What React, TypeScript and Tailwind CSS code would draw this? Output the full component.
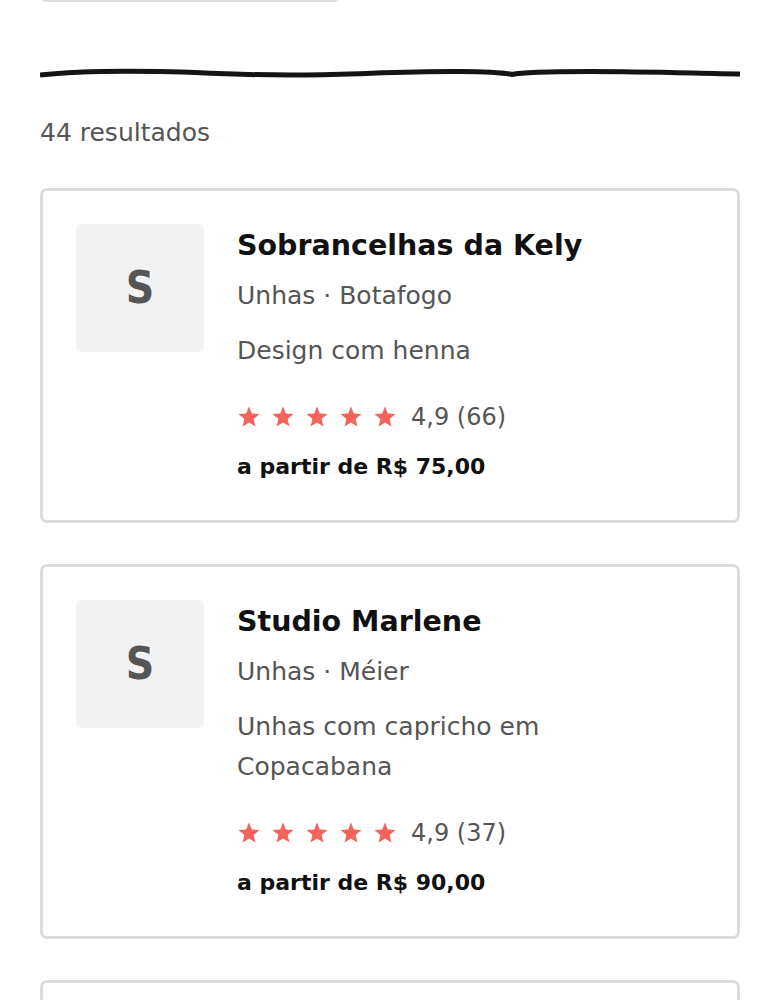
type Salon = {
  name: string;
  category: string;
  area: string;
  blurb: string;
  rating: string;
  reviews: number;
  price: string;
};

const salons: Salon[] = [
  {
    name: "Sobrancelhas da Kely",
    category: "Unhas",
    area: "Botafogo",
    blurb: "Design com henna",
    rating: "4,9",
    reviews: 66,
    price: "R$ 75,00",
  },
  {
    name: "Studio Marlene",
    category: "Unhas",
    area: "Méier",
    blurb: "Unhas com capricho em Copacabana",
    rating: "4,9",
    reviews: 37,
    price: "R$ 90,00",
  },
  {
    name: "Espaço Bella",
    category: "Unhas",
    area: "Tijuca",
    blurb: "Manicure e pedicure",
    rating: "4,8",
    reviews: 52,
    price: "R$ 60,00",
  },
];

// wavy divider, hand drawn look
const Squiggle = () => (
  <svg className="block w-full h-[14px]" viewBox="0 0 700 14" preserveAspectRatio="none">
    <path
      d="M0 9 C 30 5.5, 70 4.5, 120 5.5 C 170 6.5, 200 9.5, 260 9 C 320 8.5, 360 5, 420 5.5 C 450 5.8, 465 7, 472 8.5 C 478 7, 500 5.5, 550 5.5 C 610 5.5, 660 7.5, 700 8"
      fill="none"
      stroke="#141414"
      strokeWidth="5"
    />
  </svg>
);

const StarIcon = () => (
  <svg width="24" height="24" viewBox="0 0 24 24">
    <polygon
      points="12,1.5 14.8,8.6 22.5,9.1 16.6,14 18.5,21.6 12,17.4 5.5,21.6 7.4,14 1.5,9.1 9.2,8.6"
      fill="#f4645c"
    />
  </svg>
);

const SalonCard = ({ s }: { s: Salon }) => {
  return (
    <article className="flex gap-[33px] rounded-[7px] border-[3px] border-[#dcdcdc] bg-white px-[33px] pt-[33px] pb-[37px]">
      <div className="flex h-[128px] w-[128px] shrink-0 items-center justify-center rounded-[5px] bg-[#f2f2f2]">
        <span className="font-['DejaVu_Sans_Condensed','Liberation_Sans',sans-serif] text-[44px] font-bold text-[#555]">
          {s.name[0]}
        </span>
      </div>

      <div className="flex flex-col pt-[1px]">
        <h2 className="pt-[1px] text-[28.5px] leading-[40px] font-bold text-[#111]">{s.name}</h2>
        <p className="mt-[12px] text-[25px] leading-[36px] text-[#555]">
          {s.category} · {s.area}
        </p>
        <p className="mt-[17px] w-[330px] text-[25px] leading-[40px] text-[#555]">{s.blurb}</p>

        <div className="mt-[30px] flex h-[32px] items-center">
          <div className="flex gap-[10px]">
            {[0, 1, 2, 3, 4].map((i) => (
              <StarIcon key={i} />
            ))}
          </div>
          <span className="ml-[14px] text-[24px] text-[#555]">
            {s.rating} ({s.reviews})
          </span>
        </div>

        <p className="mt-[18px] text-[22px] leading-[32px] font-bold text-[#111]">a partir de {s.price}</p>
      </div>
    </article>
  );
};

export default function App() {
  return (
    <div className="h-[1000px] overflow-hidden bg-white font-['DejaVu_Sans','Liberation_Sans',sans-serif]">
      <div className="mx-[40px]">
        {/* tail end of the filter button above */}
        <div className="-mt-[40px] h-[42px] w-[300px] rounded-[6px] border-[2px] border-[#dddddd]" />

        <div className="mt-[64px]">
          <Squiggle />
        </div>

        <p className="mt-[37px] text-[25px] leading-[32px] text-[#555]">44 resultados</p>

        <div className="mt-[39px] flex flex-col gap-[41px]">
          {salons.map((s) => (
            <SalonCard key={s.name} s={s} />
          ))}
        </div>
      </div>
    </div>
  );
}
